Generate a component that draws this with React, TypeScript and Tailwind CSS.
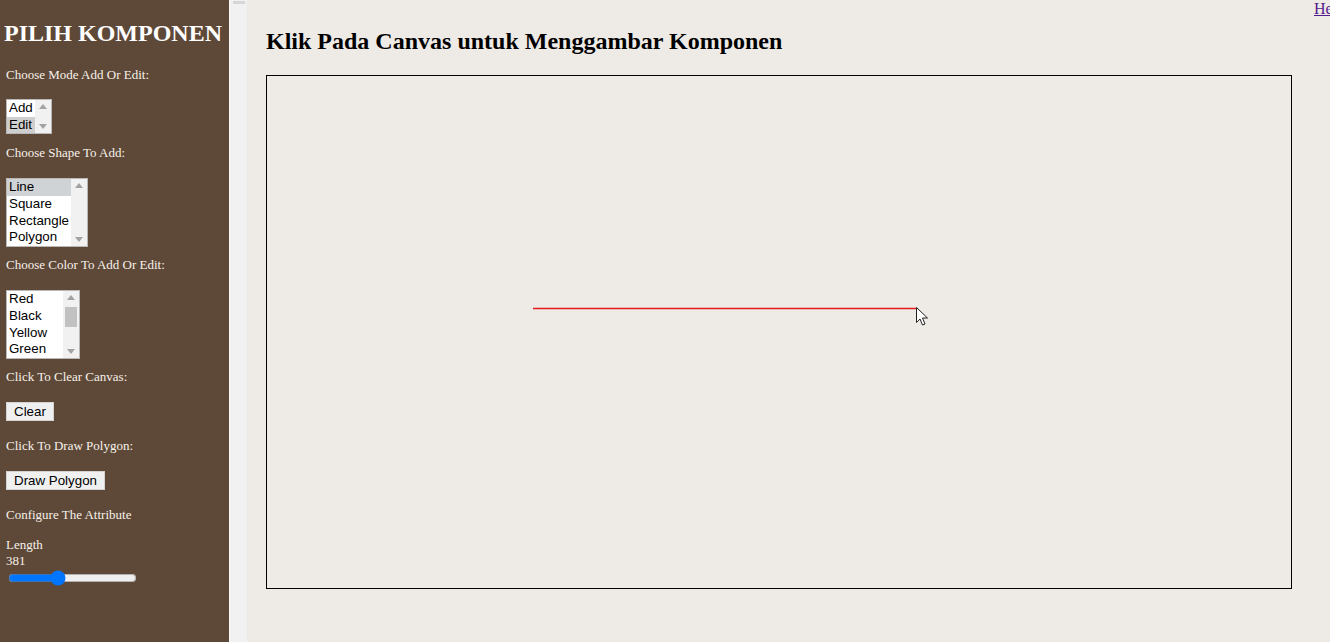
import React from 'react';

function ScrollArrows({ thumb }: { thumb?: { top: number; height: number } }) {
  return (
    <div className="relative w-[16px] h-full bg-[#f1f1f1] shrink-0">
      <svg className="absolute left-[4px] top-[4px]" width="8" height="5" viewBox="0 0 8 5">
        <path d="M0 5 L4 0 L8 5 Z" fill="#a3a3a3" />
      </svg>
      {thumb && (
        <div
          className="absolute left-[2px] w-[12px] bg-[#c1c1c1]"
          style={{ top: thumb.top, height: thumb.height }}
        />
      )}
      <svg className="absolute left-[4px] bottom-[4px]" width="8" height="5" viewBox="0 0 8 5">
        <path d="M0 0 L8 0 L4 5 Z" fill="#a3a3a3" />
      </svg>
    </div>
  );
}

function ListBox({
  items,
  selected,
  width,
  thumb,
  selColor = 'bg-[#cecece]',
}: {
  items: string[];
  selected?: number;
  width: string;
  thumb?: { top: number; height: number };
  selColor?: string;
}) {
  return (
    <div className={`flex bg-white border border-[#b8b8b8] ${width}`}>
      <div className="flex-1 flex flex-col">
        {items.map((it, i) => (
          <div
            key={it}
            className={`h-[17px] leading-[15px] pl-[2px] text-[13.33px] text-black font-['Liberation_Sans',Arial,sans-serif] ${
              i === selected ? selColor : ''
            }`}
          >
            {it}
          </div>
        ))}
      </div>
      <ScrollArrows thumb={thumb} />
    </div>
  );
}

function Label({ children, className = '' }: { children: React.ReactNode; className?: string }) {
  return <p className={`text-[13px] leading-[15px] text-[#f6f1ea] ${className}`}>{children}</p>;
}

function Btn({ children }: { children: React.ReactNode }) {
  return (
    <button className="h-[19px] px-[7px] bg-[#f0f0f0] border border-[#d4d4d4] text-[13.33px] leading-[17px] text-black font-['Liberation_Sans',Arial,sans-serif]">
      {children}
    </button>
  );
}

export default function App() {
  return (
    <div className="flex w-[1330px] h-[642px] overflow-hidden font-['Liberation_Serif','Times_New_Roman',serif]">
      {/* Sidebar */}
      <aside className="w-[229px] h-full shrink-0 bg-[#5e4837] pl-[6px] flex flex-col items-start">
        <h1 className="mt-[19px] -ml-[2px] text-[24px] leading-[28px] font-bold text-white whitespace-nowrap">
          PILIH KOMPONEN
        </h1>
        <Label className="mt-[20px]">Choose Mode Add Or Edit:</Label>
        <div className="flex mt-[17px] h-[35px]">
          <ListBox items={['Add', 'Edit']} selected={1} width="w-[46px] h-[35px]" />
        </div>
        <Label className="mt-[11px]">Choose Shape To Add:</Label>
        <div className="flex mt-[18px]">
          <ListBox
            items={['Line', 'Square', 'Rectangle', 'Polygon']}
            selected={0}
            width="w-[82px] h-[69px]"
            selColor="bg-[#d0d3d6]"
          />
        </div>
        <Label className="mt-[10px]">Choose Color To Add Or Edit:</Label>
        <div className="flex mt-[18px]">
          <ListBox
            items={['Red', 'Black', 'Yellow', 'Green']}
            width="w-[74px] h-[69px]"
            thumb={{ top: 16, height: 20 }}
          />
        </div>
        <Label className="mt-[10px]">Click To Clear Canvas:</Label>
        <div className="flex mt-[18px]">
          <Btn>Clear</Btn>
        </div>
        <Label className="mt-[17px]">Click To Draw Polygon:</Label>
        <div className="flex mt-[18px]">
          <Btn>Draw Polygon</Btn>
        </div>
        <Label className="mt-[17px]">Configure The Attribute</Label>
        <p className="mt-[15px] text-[13px] leading-[16px] text-[#f6f1ea]">Length</p>
        <p className="text-[13px] leading-[16px] text-[#f6f1ea]">381</p>
        <input
          type="range"
          min={0}
          max={1024}
          defaultValue={381}
          className="mt-[1px] ml-[2px] w-[129px] h-[16px]"
        />
      </aside>

      {/* Sidebar scrollbar strip */}
      <div className="w-[18px] h-full shrink-0 bg-[#f1f1f1] border-l border-[#fafafa] flex flex-col items-center">
        <div className="mt-[1px] w-[12px] h-[3px] bg-[#d6d6d6]" />
      </div>

      {/* Main */}
      <main className="relative flex-1 h-full bg-[#eeeae6] pl-[19px]">
        <a
          href="#"
          className="absolute left-[1067px] top-0 text-[16px] leading-[18px] text-[#551a8b] underline whitespace-nowrap"
        >
          Help
        </a>
        <h2 className="mt-[27px] text-[24px] leading-[28px] font-bold text-black whitespace-nowrap">
          Klik Pada Canvas untuk Menggambar Komponen
        </h2>
        <div className="relative mt-[20px] w-[1026px] h-[514px] border border-black">
          <svg className="absolute inset-0" width="1024" height="512">
            <line x1="266" y1="232.5" x2="649" y2="232.5" stroke="#e31b1b" strokeWidth="1.5" />
          </svg>
          <svg className="absolute left-[649px] top-[231px]" width="13" height="19" viewBox="0 0 13 19">
            <path
              d="M0.5 0.5 L0.5 15.5 L4 12 L6.5 18 L9 17 L6.5 11 L11.5 11 Z"
              fill="#ffffff"
              stroke="#222222"
              strokeWidth="1"
              strokeLinejoin="miter"
            />
          </svg>
        </div>
      </main>
    </div>
  );
}
